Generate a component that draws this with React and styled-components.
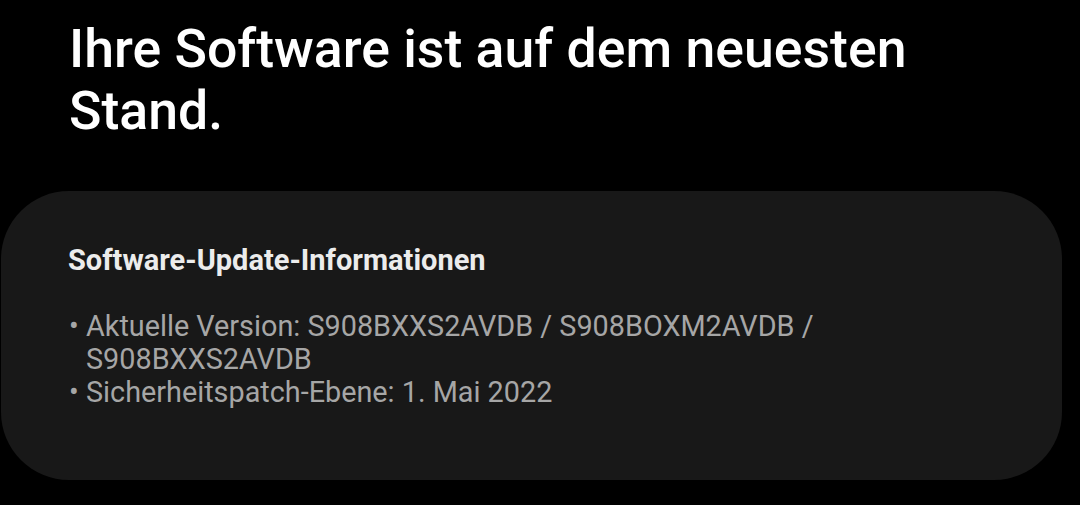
import React from "react";
import styled, { createGlobalStyle } from "styled-components";

const Global = createGlobalStyle`
  html, body { margin: 0; padding: 0; background: #000; }
  body { font-family: Roboto, "Noto Sans", sans-serif; -webkit-font-smoothing: antialiased; }
`;

const Page = styled.div`
  width: 1080px;
  height: 505px;
  background: #000;
  overflow: hidden;
  display: flex;
  flex-direction: column;
`;

const Title = styled.h1`
  margin: 0;
  padding: 18px 120px 0 69px;
  font-size: 53.6px;
  font-weight: 500;
  line-height: 62px;
  color: #fff;
`;

const Card = styled.section`
  margin: 49px 18px 0 1px;
  height: 289px;
  flex: none;
  box-sizing: border-box;
  background: #181818;
  border-radius: 68px;
  padding: 52px 67px 0 67px;
`;

const CardTitle = styled.h2`
  margin: 0;
  font-size: 29px;
  font-weight: 700;
  line-height: 34px;
  color: #ececec;
`;

const List = styled.ul`
  list-style: none;
  margin: 33px 0 0;
  padding: 0;
`;

const Item = styled.li`
  display: flex;
  font-size: 28.8px;
  line-height: 33px;
  color: #a6a6a6;
`;

const Bullet = styled.span`
  width: 18px;
  flex: none;
  padding-left: 1px;
  box-sizing: border-box;
`;

export default function App() {
  return (
    <Page>
      <Global />
      <Title>Ihre Software ist auf dem neuesten Stand.</Title>
      <Card>
        <CardTitle>Software-Update-Informationen</CardTitle>
        <List>
          <Item>
            <Bullet>•</Bullet>
            <span>Aktuelle Version: S908BXXS2AVDB / S908BOXM2AVDB / S908BXXS2AVDB</span>
          </Item>
          <Item>
            <Bullet>•</Bullet>
            <span>Sicherheitspatch-Ebene: 1. Mai 2022</span>
          </Item>
        </List>
      </Card>
    </Page>
  );
}
